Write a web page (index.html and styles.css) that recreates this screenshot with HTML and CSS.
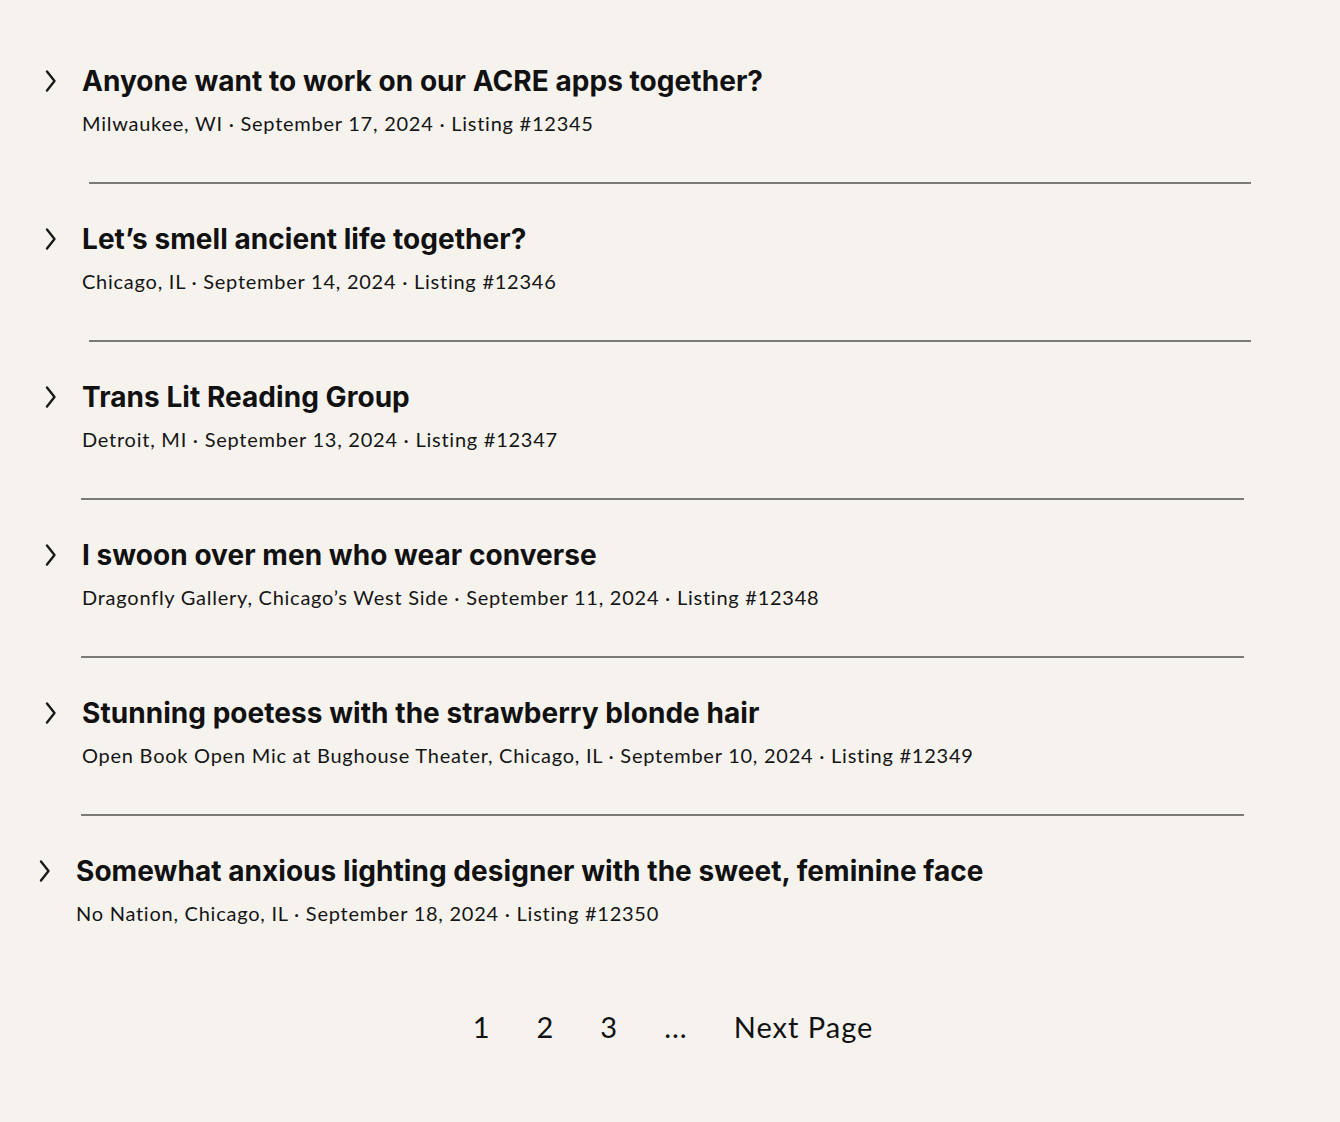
FILE: index.html
```html
<!DOCTYPE html>
<html lang="en">
<head>
<meta charset="utf-8">
<title>Listings</title>
<link rel="stylesheet" href="styles.css">
</head>
<body>
<main class="listings">
  <ul class="list">
    <li class="item">
      <div class="row">
        <svg class="chev" viewBox="0 0 18 24" width="18" height="24"><path d="M7 2.5 L14.5 12 L7 21.5" fill="none" stroke="#1a1a1a" stroke-width="2.4" stroke-linecap="round" stroke-linejoin="round"/></svg>
        <div class="body">
          <h2 class="title">Anyone want to work on our ACRE apps together?</h2>
          <p class="meta">Milwaukee, WI · September 17, 2024 · Listing #12345</p>
        </div>
      </div>
      <hr class="sep sep--a">
    </li>
    <li class="item">
      <div class="row">
        <svg class="chev" viewBox="0 0 18 24" width="18" height="24"><path d="M7 2.5 L14.5 12 L7 21.5" fill="none" stroke="#1a1a1a" stroke-width="2.4" stroke-linecap="round" stroke-linejoin="round"/></svg>
        <div class="body">
          <h2 class="title">Let’s smell ancient life together?</h2>
          <p class="meta">Chicago, IL · September 14, 2024 · Listing #12346</p>
        </div>
      </div>
      <hr class="sep sep--a">
    </li>
    <li class="item">
      <div class="row">
        <svg class="chev" viewBox="0 0 18 24" width="18" height="24"><path d="M7 2.5 L14.5 12 L7 21.5" fill="none" stroke="#1a1a1a" stroke-width="2.4" stroke-linecap="round" stroke-linejoin="round"/></svg>
        <div class="body">
          <h2 class="title">Trans Lit Reading Group</h2>
          <p class="meta">Detroit, MI · September 13, 2024 · Listing #12347</p>
        </div>
      </div>
      <hr class="sep sep--b">
    </li>
    <li class="item">
      <div class="row">
        <svg class="chev" viewBox="0 0 18 24" width="18" height="24"><path d="M7 2.5 L14.5 12 L7 21.5" fill="none" stroke="#1a1a1a" stroke-width="2.4" stroke-linecap="round" stroke-linejoin="round"/></svg>
        <div class="body">
          <h2 class="title">I swoon over men who wear converse</h2>
          <p class="meta">Dragonfly Gallery, Chicago’s West Side · September 11, 2024 · Listing #12348</p>
        </div>
      </div>
      <hr class="sep sep--b">
    </li>
    <li class="item">
      <div class="row">
        <svg class="chev" viewBox="0 0 18 24" width="18" height="24"><path d="M7 2.5 L14.5 12 L7 21.5" fill="none" stroke="#1a1a1a" stroke-width="2.4" stroke-linecap="round" stroke-linejoin="round"/></svg>
        <div class="body">
          <h2 class="title">Stunning poetess with the strawberry blonde hair</h2>
          <p class="meta">Open Book Open Mic at Bughouse Theater, Chicago, IL · September 10, 2024 · Listing #12349</p>
        </div>
      </div>
      <hr class="sep sep--b">
    </li>
    <li class="item item--shift">
      <div class="row">
        <svg class="chev" viewBox="0 0 18 24" width="18" height="24"><path d="M7 2.5 L14.5 12 L7 21.5" fill="none" stroke="#1a1a1a" stroke-width="2.4" stroke-linecap="round" stroke-linejoin="round"/></svg>
        <div class="body">
          <h2 class="title">Somewhat anxious lighting designer with the sweet, feminine face</h2>
          <p class="meta">No Nation, Chicago, IL · September 18, 2024 · Listing #12350</p>
        </div>
      </div>
    </li>
  </ul>
  <nav class="pager">
    <a class="page" href="#">1</a>
    <a class="page" href="#">2</a>
    <a class="page" href="#">3</a>
    <span class="page">...</span>
    <a class="page" href="#">Next Page</a>
  </nav>
</main>
</body>
</html>
```
FILE: styles.css
```css
html, body {
  margin: 0;
  padding: 0;
  background: #f6f3ee;
}
body {
  color: #121212;
  font-family: "Lato", "Open Sans", sans-serif;
}
.listings {
  padding-top: 63px;
}
.list {
  list-style: none;
  margin: 0;
  padding: 0;
}
.item + .item {
  margin-top: 37.5px;
}
.row {
  display: flex;
  align-items: flex-start;
  padding-left: 40px;
}
.item--shift .row {
  padding-left: 34px;
}
.chev {
  flex: none;
  margin-top: 6px;
  width: 18px;
  height: 24px;
}
.body {
  margin-left: 24px;
}
.title {
  margin: 0;
  font-family: "Inter", "Roboto", sans-serif;
  font-weight: 700;
  font-size: 28px;
  line-height: 36px;
  letter-spacing: 0.05px;
  color: #111;
}
.meta {
  margin: 10px 0 0;
  font-family: "Lato", sans-serif;
  font-size: 20px;
  line-height: 28px;
  letter-spacing: 0.75px;
  color: #151515;
}
.sep {
  border: 0;
  height: 1.5px;
  background: #7c7b78;
  margin: 45px 0 0;
}
.sep--a {
  margin-left: 89px;
  width: 1162px;
}
.sep--b {
  margin-left: 81px;
  width: 1163px;
}
.pager {
  display: flex;
  justify-content: center;
  gap: 46px;
  margin-top: 82px;
  padding-left: 6px;
  font-family: "Lato", sans-serif;
  font-size: 29px;
  line-height: 36px;
  letter-spacing: 1px;
}
.page {
  color: #121212;
  text-decoration: none;
}
```
